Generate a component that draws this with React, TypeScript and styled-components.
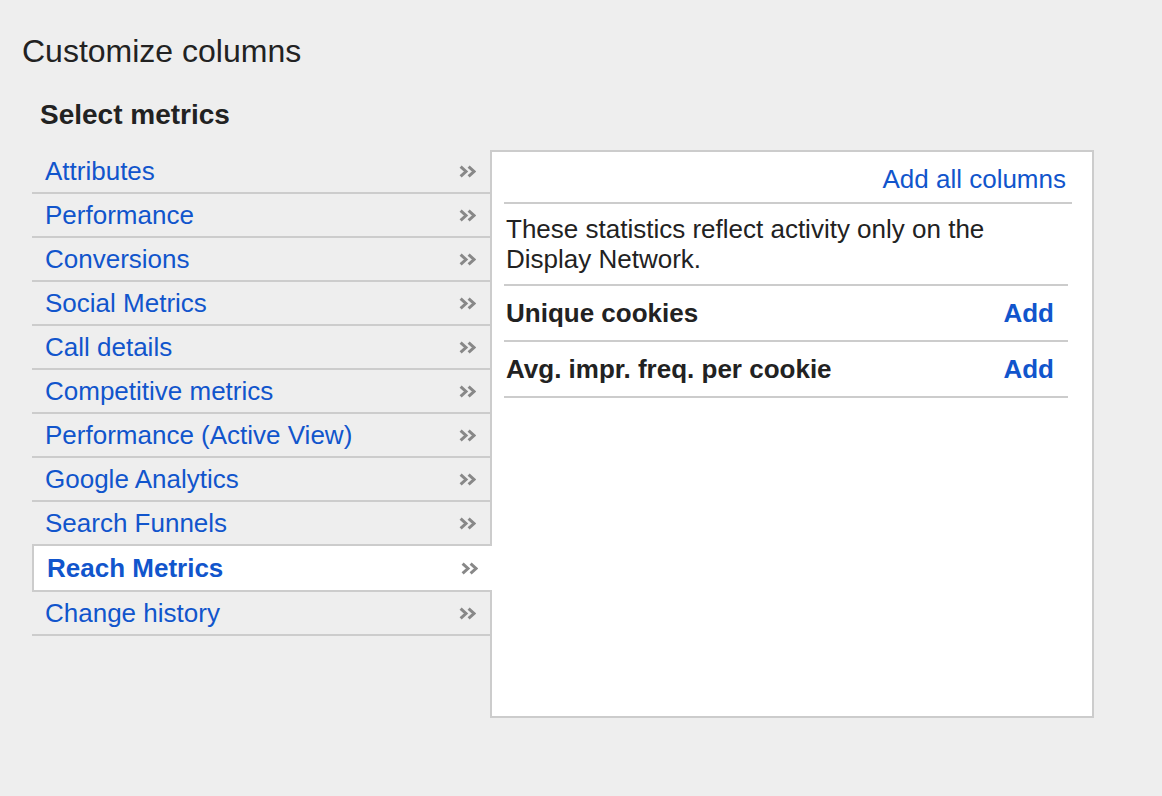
import React, { useState } from 'react';
import styled, { createGlobalStyle } from 'styled-components';

const GlobalStyle = createGlobalStyle`
  html, body {
    margin: 0;
    padding: 0;
    background: #eeeeee;
  }
  body {
    font-family: "Liberation Sans", Arial, sans-serif;
    color: #222222;
  }
`;

const Page = styled.div`
  width: 1162px;
  min-height: 796px;
  padding: 31px 0 0 22px;
  box-sizing: border-box;
`;

const Title = styled.h1`
  margin: 0;
  font-size: 32px;
  font-weight: 400;
  line-height: 40px;
  color: #222222;
`;

const Section = styled.div`
  margin: 27px 0 0 10px;
`;

const Subtitle = styled.h2`
  margin: 0 0 19px 8px;
  padding-top: 1px;
  font-size: 28px;
  font-weight: 700;
  line-height: 32px;
  color: #222222;
`;

const Columns = styled.div`
  display: flex;
  align-items: flex-start;
`;

const CategoryList = styled.ul`
  list-style: none;
  margin: 0;
  padding: 0;
  width: 458px;
  flex: none;
`;

const CategoryItem = styled.li<{ $active: boolean }>`
  display: flex;
  align-items: center;
  justify-content: space-between;
  box-sizing: border-box;
  height: ${(p) => (p.$active ? '46px' : '44px')};
  padding: ${(p) => (p.$active ? '1px 14px 0 13px' : '0 14px 0 13px')};
  font-size: 26px;
  font-weight: ${(p) => (p.$active ? 700 : 400)};
  color: #1155cc;
  cursor: pointer;
  border-bottom: 2px solid #cccccc;
  background: ${(p) => (p.$active ? '#ffffff' : 'transparent')};
  border-left: ${(p) => (p.$active ? '2px solid #cccccc' : 'none')};
  margin-right: ${(p) => (p.$active ? '-2px' : '0')};
  position: relative;
  z-index: ${(p) => (p.$active ? 1 : 0)};
`;

const Chevrons = styled.svg`
  width: 17px;
  height: 13px;
  flex: none;
`;

const Panel = styled.div`
  width: 604px;
  height: 568px;
  box-sizing: border-box;
  flex: none;
  background: #ffffff;
  border: 2px solid #cccccc;
  padding: 0 0 0 12px;
`;

const PanelHeader = styled.div`
  display: flex;
  justify-content: flex-end;
  margin-right: 20px;
  padding: 4px 6px 0 0;
  line-height: 46px;
  border-bottom: 2px solid #cccccc;
`;

const Link = styled.a`
  font-size: 26px;
  color: #1155cc;
  text-decoration: none;
  cursor: pointer;
`;

const Description = styled.p`
  margin: 0 24px 0 0;
  padding: 10px 0 10px 2px;
  font-size: 26px;
  line-height: 30px;
  color: #222222;
  border-bottom: 2px solid #cccccc;
`;

const MetricRow = styled.div`
  display: flex;
  align-items: center;
  justify-content: space-between;
  height: 56px;
  box-sizing: border-box;
  margin-right: 24px;
  padding: 0 14px 0 2px;
  border-bottom: 2px solid #cccccc;
`;

const MetricName = styled.span`
  font-size: 26px;
  font-weight: 700;
  color: #222222;
`;

const AddLink = styled(Link)`
  font-weight: 700;
`;

const categories = [
  'Attributes',
  'Performance',
  'Conversions',
  'Social Metrics',
  'Call details',
  'Competitive metrics',
  'Performance (Active View)',
  'Google Analytics',
  'Search Funnels',
  'Reach Metrics',
  'Change history',
];

const metrics = ['Unique cookies', 'Avg. impr. freq. per cookie'];

const ChevronIcon = () => (
  <Chevrons viewBox="0 0 17 13">
    <polyline points="1.6,1.6 7,6.5 1.6,11.4" fill="none" stroke="#888888" strokeWidth="3" />
    <polyline points="9.6,1.6 15,6.5 9.6,11.4" fill="none" stroke="#888888" strokeWidth="3" />
  </Chevrons>
);

const App = () => {
  const [active, setActive] = useState('Reach Metrics');

  return (
    <Page>
      <GlobalStyle />
      <Title>Customize columns</Title>
      <Section>
        <Subtitle>Select metrics</Subtitle>
        <Columns>
          <CategoryList>
            {categories.map((c) => (
              <CategoryItem key={c} $active={c === active} onClick={() => setActive(c)}>
                <span>{c}</span>
                <ChevronIcon />
              </CategoryItem>
            ))}
          </CategoryList>
          <Panel>
            <PanelHeader>
              <Link>Add all columns</Link>
            </PanelHeader>
            <Description>
              These statistics reflect activity only on the
              <br />
              Display Network.
            </Description>
            {metrics.map((m) => (
              <MetricRow key={m}>
                <MetricName>{m}</MetricName>
                <AddLink>Add</AddLink>
              </MetricRow>
            ))}
          </Panel>
        </Columns>
      </Section>
    </Page>
  );
};

export default App;
